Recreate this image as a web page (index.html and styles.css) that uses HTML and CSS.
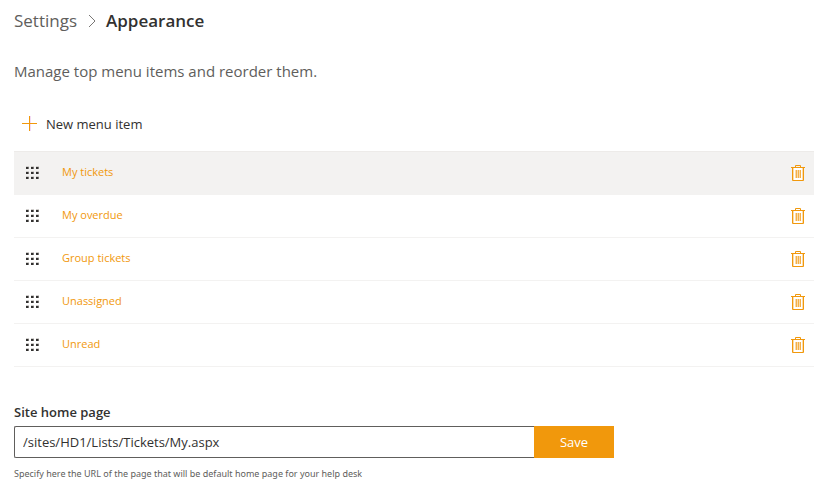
FILE: index.html
```html
<!DOCTYPE html>
<html lang="en">
<head>
<meta charset="utf-8">
<title>Settings - Appearance</title>
<link rel="stylesheet" href="styles.css">
</head>
<body>
<svg class="sprite" aria-hidden="true">
  <symbol id="grip" viewBox="0 0 14 14">
    <path fill="#d2d0ce" d="M0 0h3v1H0zM5 0h3v1H5zM10 0h3v1h-3zM0 5h3v1H0zM5 5h3v1H5zM10 5h3v1h-3zM0 10h3v1H0zM5 10h3v1H5zM10 10h3v1h-3z"/>
    <path fill="#323130" d="M0 1h2v2H0zM5 1h2v2H5zM10 1h2v2h-2zM0 6h2v2H0zM5 6h2v2H5zM10 6h2v2h-2zM0 11h2v2H0zM5 11h2v2H5zM10 11h2v2h-2z"/>
    <path fill="#797775" d="M2 1h1v2H2zM7 1h1v2H7zM12 1h1v2h-1zM2 6h1v2H2zM7 6h1v2H7zM12 6h1v2h-1zM2 11h1v2H2zM7 11h1v2H7zM12 11h1v2h-1z"/>
  </symbol>
  <symbol id="trash" viewBox="0 0 14 16">
    <path fill="#fff" d="M2 3h10v12H2z"/>
    <path fill="#fadcab" d="M4 5h6v8H4zM2 3h1v12H2zM11 3h1v12h-1z"/>
    <path fill="none" stroke="#f1980c" d="M0 2.500h14M4.500 2V.5h5V2M1.500 3v12.500h11V3"/>
    <path fill="none" stroke="#f4b04a" d="M5.500 5v8M7.500 5v8M9.500 5v8"/>
  </symbol>
</svg>
<main class="page">
  <nav class="breadcrumb" aria-label="Breadcrumb">
    <a href="#">Settings</a>
    <svg class="chevron" viewBox="0 0 8 14" aria-hidden="true"><path d="M1 1l6 6-6 6"/></svg>
    <h1>Appearance</h1>
  </nav>
  <p class="intro">Manage top menu items and reorder them.</p>
  <button class="new-item" type="button">
    <svg class="plus" viewBox="0 0 16 16" aria-hidden="true"><path class="plus-edge" d="M8.500 0v15"/><path class="plus-line" d="M7.500 0v15M0 7.500h15"/></svg>
    New menu item
  </button>
  <ul class="menu-list">
    <li class="row selected"><svg class="grip"><use href="#grip"/></svg><a href="#">My tickets</a><button type="button" aria-label="Delete My tickets"><svg class="trash"><use href="#trash"/></svg></button></li>
    <li class="row"><svg class="grip"><use href="#grip"/></svg><a href="#">My overdue</a><button type="button" aria-label="Delete My overdue"><svg class="trash"><use href="#trash"/></svg></button></li>
    <li class="row"><svg class="grip"><use href="#grip"/></svg><a href="#">Group tickets</a><button type="button" aria-label="Delete Group tickets"><svg class="trash"><use href="#trash"/></svg></button></li>
    <li class="row"><svg class="grip"><use href="#grip"/></svg><a href="#">Unassigned</a><button type="button" aria-label="Delete Unassigned"><svg class="trash"><use href="#trash"/></svg></button></li>
    <li class="row"><svg class="grip"><use href="#grip"/></svg><a href="#">Unread</a><button type="button" aria-label="Delete Unread"><svg class="trash"><use href="#trash"/></svg></button></li>
  </ul>
  <form class="home-form">
    <label for="home">Site home page</label>
    <div class="field">
      <input id="home" type="text" value="/sites/HD1/Lists/Tickets/My.aspx">
      <button type="button">Save</button>
    </div>
    <p class="hint">Specify here the URL of the page that will be default home page for your help desk</p>
  </form>
</main>
</body>
</html>
```
FILE: styles.css
```css
* { box-sizing: border-box; }
body {
  margin: 0;
  background: #fff;
  color: #323130;
  font: 13px/20px "Segoe UI", "Open Sans", "Noto Sans", sans-serif;
}
button, input { font: inherit; color: inherit; }
button { border: 0; background: none; cursor: pointer; }
a { text-decoration: none; }
.sprite { display: none; }
.page { padding: 8px 12px 0 14px; }

.breadcrumb {
  display: flex;
  align-items: center;
  font-size: 17px;
  line-height: 26px;
}
.breadcrumb a { color: #605e5c; }
.breadcrumb h1 { margin: 0; font-size: inherit; font-weight: 600; }
.chevron {
  width: 8px;
  height: 14px;
  margin: 0 10px 0 11px;
  fill: none;
  stroke: #797775;
}
.intro {
  margin: 25px 0 0;
  color: #605e5c;
  font-size: 15px;
  line-height: 24px;
}
.new-item {
  display: flex;
  align-items: center;
  gap: 8px;
  height: 40px;
  margin-top: 21px;
  padding: 0 8px;
}
.plus { width: 16px; height: 16px; fill: none; }
.plus-edge { stroke: #f3dcf5; }
.plus-line { stroke: #f1980c; }

.menu-list {
  margin: 7px 0 0;
  padding: 0;
  list-style: none;
  border-top: 1px solid #edebe9;
}
.row {
  display: flex;
  align-items: center;
  height: 43px;
  padding: 0 9px 0 12px;
  border-bottom: 1px solid #f3f2f1;
}
.row.selected { background: #f3f2f1; }
.row a {
  flex: 1;
  padding-bottom: 2px;
  color: #f1980c;
  font-size: 11px;
}
.row button { display: flex; padding: 0; }
.grip { width: 14px; height: 14px; margin-right: 22px; }
.trash { width: 14px; height: 16px; }

.home-form { max-width: 600px; margin-top: 35px; }
.home-form label { display: block; font-weight: 600; }
.field { display: flex; height: 32px; margin-top: 4px; }
.field input {
  flex: 1;
  min-width: 0;
  padding: 0 8px;
  border: 1px solid #605e5c;
  border-right: 0;
  border-radius: 2px 0 0 2px;
  outline: 0;
  background: #fff;
}
.field button {
  width: 80px;
  background: #f1980c;
  color: #fff;
}
.hint {
  margin: 8px 0 0;
  color: #605e5c;
  font-family: "Segoe UI", "Noto Sans", sans-serif;
  font-size: 9px;
  line-height: 16px;
}
```
